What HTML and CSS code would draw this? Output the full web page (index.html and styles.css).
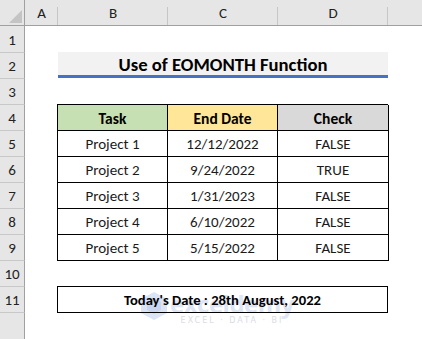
FILE: index.html
```html
<!DOCTYPE html>
<html>
<head>
<meta charset="utf-8">
<link rel="stylesheet" href="styles.css">
</head>
<body>
<div class="sheet">
  <div class="corner"><span class="tri"></span></div>
  <div class="colh">A</div>
  <div class="colh">B</div>
  <div class="colh">C</div>
  <div class="colh">D</div>
  <div class="colh last"></div>

  <div class="rowh r1">1</div>
  <div class="rowh r2">2</div>
  <div class="rowh r3">3</div>
  <div class="rowh r4">4</div>
  <div class="rowh r5">5</div>
  <div class="rowh r6">6</div>
  <div class="rowh r7">7</div>
  <div class="rowh r8">8</div>
  <div class="rowh r9">9</div>
  <div class="rowh r10">10</div>
  <div class="rowh r11">11</div>
  <div class="rowh r12"></div>

  <div class="title">Use of EOMONTH Function</div>

  <div class="table">
    <div class="cell th task">Task</div>
    <div class="cell th date">End Date</div>
    <div class="cell th check">Check</div>
    <div class="cell">Project 1</div><div class="cell">12/12/2022</div><div class="cell">FALSE</div>
    <div class="cell">Project 2</div><div class="cell">9/24/2022</div><div class="cell">TRUE</div>
    <div class="cell">Project 3</div><div class="cell">1/31/2023</div><div class="cell">FALSE</div>
    <div class="cell">Project 4</div><div class="cell">6/10/2022</div><div class="cell">FALSE</div>
    <div class="cell">Project 5</div><div class="cell">5/15/2022</div><div class="cell">FALSE</div>
  </div>

  <div class="today">Today's Date : 28th August, 2022</div>

  <div class="watermark">
    <svg class="wm-icon" width="28" height="30" viewBox="0 0 28 30">
      <polygon points="14,1 27,8 27,22 14,29 1,22 1,8" fill="#d3def3"/>
      <polygon points="14,7 21,11 21,19 14,23 7,19 7,11" fill="#bccbea"/>
    </svg>
    <div class="wm-text">
      <div class="wm-name">exceldemy</div>
      <div class="wm-sub">EXCEL · DATA · BI</div>
    </div>
  </div>
</div>
</body>
</html>
```

FILE: styles.css
```css
html, body {
  margin: 0;
  padding: 0;
  background: #ffffff;
}

.sheet {
  position: relative;
  width: 422px;
  height: 339px;
  display: grid;
  grid-template-columns: 25px 33px 110px 110px 110px 1fr;
  grid-template-rows: 26px 27px repeat(10, 26px) 1fr;
  font-family: "Carlito", "Calibri", "Lato", sans-serif;
  color: #111;
  overflow: hidden;
}

.corner {
  grid-column: 1;
  grid-row: 1;
  background: #e6e6e6;
  border-bottom: 1px solid #a0a0a0;
  border-right: 1px solid #a0a0a0;
  box-sizing: border-box;
  position: relative;
}

.tri {
  position: absolute;
  right: 2px;
  bottom: 2px;
  width: 0;
  height: 0;
  border-left: 13px solid transparent;
  border-bottom: 13px solid #c4c4c4;
}

.colh {
  grid-row: 1;
  background: #e6e6e6;
  border-bottom: 1px solid #a0a0a0;
  box-sizing: border-box;
  display: flex;
  align-items: flex-end;
  justify-content: center;
  padding-bottom: 3px;
  font-size: 15px;
  color: #222;
  position: relative;
}

.colh::after {
  content: "";
  position: absolute;
  right: 0;
  top: 7px;
  bottom: 0;
  width: 1px;
  background: #c6c6c6;
}

.colh.last::after { display: none; }

.rowh {
  grid-column: 1;
  background: #e6e6e6;
  border-right: 1px solid #a0a0a0;
  border-bottom: 1px solid #c8c8c8;
  box-sizing: border-box;
  display: flex;
  align-items: flex-end;
  justify-content: center;
  padding-bottom: 3px;
  font-size: 15px;
  color: #222;
}

.r1 { grid-row: 2; }
.r2 { grid-row: 3; }
.r3 { grid-row: 4; }
.r4 { grid-row: 5; }
.r5 { grid-row: 6; }
.r6 { grid-row: 7; }
.r7 { grid-row: 8; }
.r8 { grid-row: 9; }
.r9 { grid-row: 10; }
.r10 { grid-row: 11; }
.r11 { grid-row: 12; }
.r12 { grid-row: 13; border-bottom: none; }

.title {
  grid-column: 3 / 6;
  grid-row: 3;
  margin-top: -1px;
  height: 26px;
  background: #f2f2f2;
  border-bottom: 3px solid #4472c4;
  box-sizing: border-box;
  display: flex;
  align-items: center;
  justify-content: center;
  font-weight: 700;
  font-size: 18.7px;
  color: #000;
  padding-top: 1px;
}

.table {
  grid-column: 3 / 6;
  grid-row: 5 / 11;
  margin-top: -1px;
  display: grid;
  grid-template-columns: 110px 110px 111px;
  grid-template-rows: repeat(6, 26px);
  border-top: 1px solid #000;
  border-left: 1px solid #000;
  margin-left: -1px;
}

.cell {
  border-right: 1px solid #000;
  border-bottom: 1px solid #000;
  display: flex;
  align-items: center;
  justify-content: center;
  font-size: 15px;
  color: #1a1a1a;
  padding-top: 1px;
}

.th {
  font-weight: 700;
  font-size: 15.5px;
  color: #000;
}

.task { background: #c6e0b4; }
.date { background: #ffe699; }
.check { background: #d9d9d9; }

.today {
  grid-column: 3 / 6;
  grid-row: 12;
  margin-top: -1px;
  margin-left: -1px;
  height: 27px;
  border: 1px solid #000;
  box-sizing: border-box;
  display: flex;
  align-items: center;
  justify-content: center;
  font-weight: 700;
  font-size: 14.6px;
  color: #000;
  position: relative;
  z-index: 1;
}

.watermark {
  position: absolute;
  left: 140px;
  top: 291px;
  display: flex;
  align-items: flex-start;
  gap: 2px;
  opacity: 0.8;
  pointer-events: none;
}

.wm-text {
  display: flex;
  flex-direction: column;
  align-items: center;
}

.wm-name {
  font-family: "Open Sans", sans-serif;
  font-weight: 700;
  font-size: 24px;
  line-height: 25px;
  color: #d6e0f3;
  letter-spacing: -0.5px;
}

.wm-sub {
  font-family: "DejaVu Sans", sans-serif;
  font-size: 8px;
  line-height: 9px;
  letter-spacing: 2px;
  color: #d0d5dc;
}
```
